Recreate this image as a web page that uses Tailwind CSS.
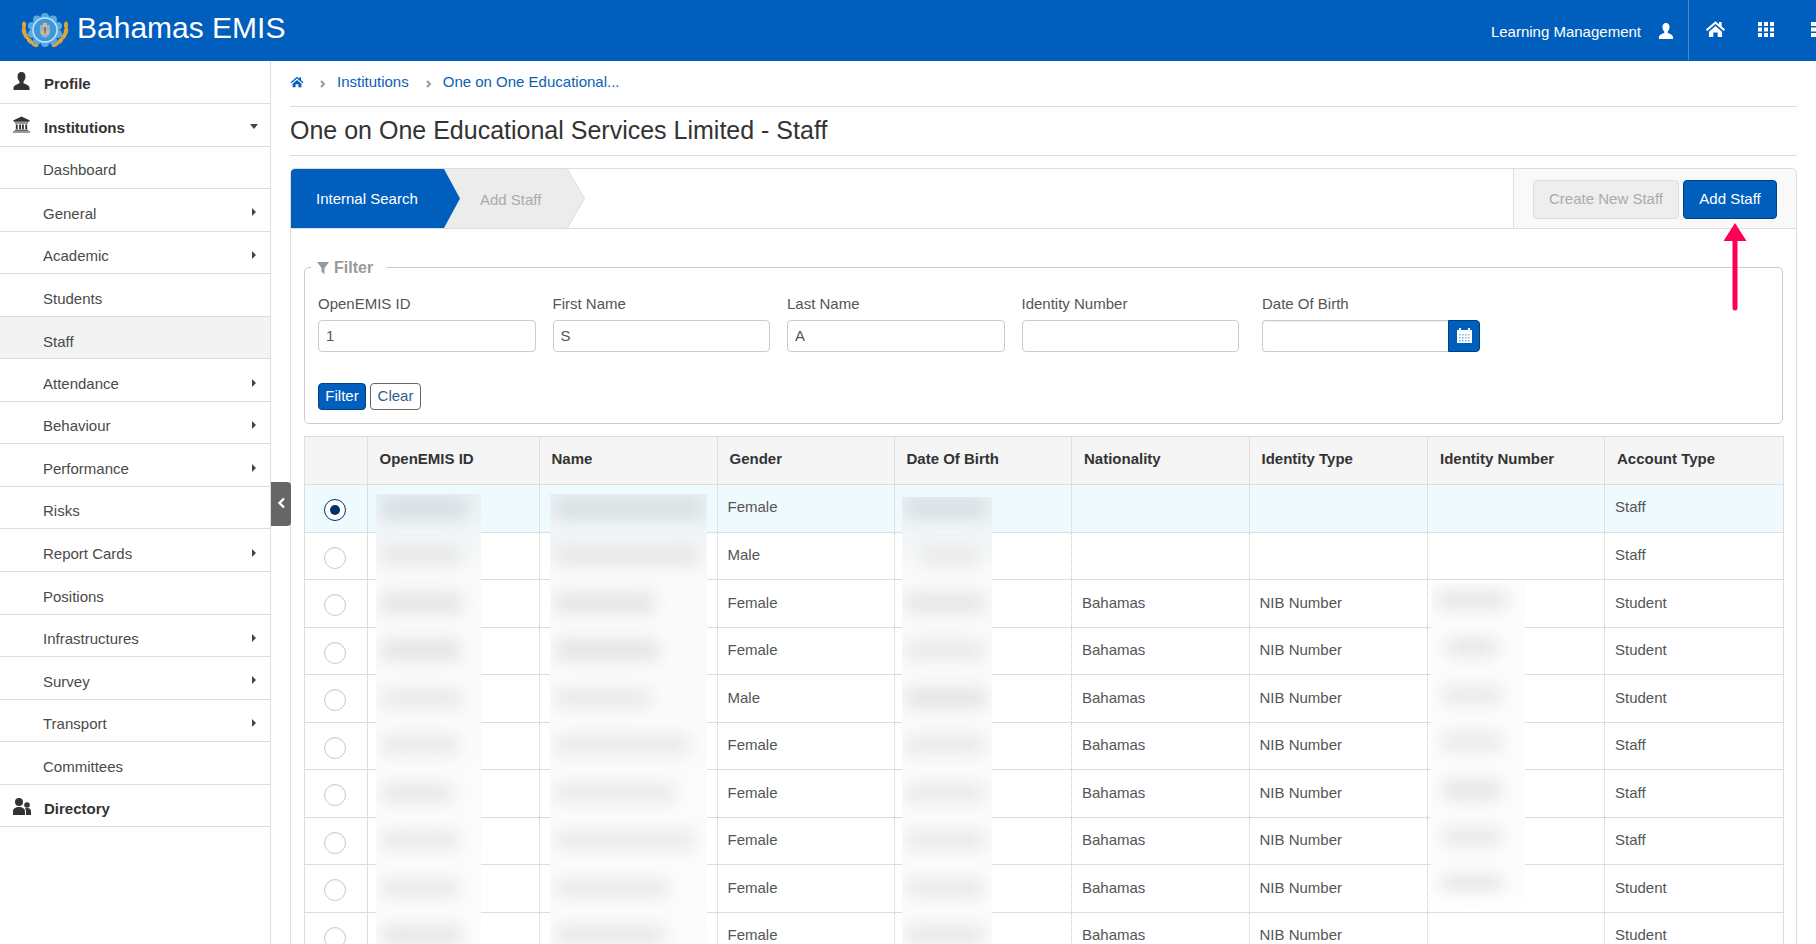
<!DOCTYPE html>
<html lang="en">
<head>
<meta charset="utf-8">
<title>Bahamas EMIS</title>
<script src="https://cdn.jsdelivr.net/npm/@tailwindcss/browser@4"></script>
</head>
<body class="font-['Liberation_Sans',Arial,sans-serif] text-[15px] text-[#555] bg-white">
<div class="relative w-[1816px] h-[944px] overflow-hidden">
  <header class="h-[61px] bg-[#005ebd] flex items-center text-white">
    <svg class="ml-[20px] shrink-0" width="50" height="40" viewBox="0 0 50 40">
      <g fill="#dba63c">
        <ellipse cx="4" cy="14" rx="2" ry="3.6"/><ellipse cx="4" cy="20" rx="2.2" ry="3.6" transform="rotate(-10 4 20)"/><ellipse cx="6" cy="25" rx="2.2" ry="3.6" transform="rotate(-30 6 25)"/><ellipse cx="10" cy="30" rx="2.2" ry="3.6" transform="rotate(-45 10 30)"/><ellipse cx="15" cy="33.500" rx="2.2" ry="3.6" transform="rotate(-65 15 33.500)"/>
        <ellipse cx="46" cy="14" rx="2" ry="3.6"/><ellipse cx="46" cy="20" rx="2.2" ry="3.6" transform="rotate(10 46 20)"/><ellipse cx="44" cy="25" rx="2.2" ry="3.6" transform="rotate(30 44 25)"/><ellipse cx="40" cy="30" rx="2.2" ry="3.6" transform="rotate(45 40 30)"/><ellipse cx="35" cy="33.500" rx="2.2" ry="3.6" transform="rotate(65 35 33.500)"/>
      </g>
      <g fill="#5aa9e2">
        <circle cx="25" cy="6" r="4"/><circle cx="33" cy="8.500" r="4"/><circle cx="38" cy="15" r="4"/><circle cx="38" cy="23" r="4"/><circle cx="33" cy="29.500" r="4"/><circle cx="25" cy="32" r="4"/><circle cx="17" cy="29.500" r="4"/><circle cx="12" cy="23" r="4"/><circle cx="12" cy="15" r="4"/><circle cx="17" cy="8.500" r="4"/>
        <circle cx="25" cy="19" r="14"/>
      </g>
      <circle cx="25" cy="19" r="12" fill="#3f96d8" stroke="#c4e6f6" stroke-width="1.500"/>
      <path d="M20 14h10v7c0 3-3 5-5 6-2-1-5-3-5-6z" fill="#8fb8c4"/>
      <path d="M23 12h4v4h-4z M21 20h8v3h-8z" fill="#d9b98a"/>
      <path d="M24 16h2v6h-2z" fill="#b85f5f"/>
    </svg>
    <span class="ml-[7px] text-[30px] leading-none -mt-[5px]">Bahamas EMIS</span>
    <span class="ml-auto mt-[3px]">Learning Management</span>
    <svg class="ml-[17px] mt-[1px]" width="16" height="16" viewBox="0 0 16 18" fill="#fff"><path d="M8 0c2.600 0 4 2 4 4.600 0 2-.8 3.800-2 5v1.600c2 .8 6 2 6 4.800v2H0v-2c0-2.800 4-4 6-4.800V9.600C4.800 8.400 4 6.600 4 4.600 4 2 5.400 0 8 0z"/></svg>
    <span class="ml-[14px] w-px h-[60px] bg-[#4a8acb] -mt-px"></span>
    <svg class="ml-[16px] -mt-[3px]" width="21" height="18" viewBox="0 0 24 20" fill="#fff"><path d="M12 1 1 10.500l1.500 1.800L12 4.200l9.500 8.100 1.500-1.800-4-3.400V2h-3v2.700z"/><path d="M4.500 13 12 6.500l7.500 6.500v6h-5v-5h-5v5h-5z"/></svg>
    <svg class="ml-[32px] -mt-[3px]" width="16" height="15" viewBox="0 0 16 15" fill="#fff"><path d="M0 0h4v4H0zM6 0h4v4H6zM12 0h4v4h-4zM0 5.500h4v4H0zM6 5.500h4v4H6zM12 5.500h4v4h-4zM0 11h4v4H0zM6 11h4v4H6zM12 11h4v4h-4z"/></svg>
    <svg class="ml-[37px] -mt-[3px]" width="5" height="15" viewBox="0 0 5 15" fill="#fff"><path d="M0 0h5v4H0zM0 5.500h5v4H0zM0 11h5v4H0z"/></svg>
  </header>

  <div class="flex h-[883px]">
    <aside class="w-[271px] shrink-0 border-r border-[#ddd] text-[#4a4a4a]">
      <div class="h-[43px] border-b border-[#ddd] flex items-center pl-[13px] pt-[5px] font-bold text-[#333]">
        <svg class="-mt-[7px]" width="17" height="18" viewBox="0 0 16 18" fill="#333"><path d="M8 0c2.600 0 4 2 4 4.600 0 2-.8 3.800-2 5v1.600c2 .8 6 2 6 4.800v2H0v-2c0-2.800 4-4 6-4.800V9.600C4.800 8.400 4 6.600 4 4.600 4 2 5.400 0 8 0z"/></svg>
        <span class="ml-[14px]">Profile</span>
      </div>
      <div class="h-[42.55px] border-b border-[#ddd] flex items-center pl-[13px] pr-[12px] pt-[7px] font-bold text-[#333]">
        <svg class="-mt-[7px]" width="17" height="17" viewBox="0 0 18 17" fill="#333"><path d="M9 0 .5 4v1.500h17V4zM2 6.500h14v1H2zM3 8.500h2v5H3zM6.500 8.500h2v5h-2zM9.500 8.500h2v5h-2zM13 8.500h2v5h-2zM2 14h14v1H2zM0 16h18v1H0z"/></svg>
        <span class="ml-[14px]">Institutions</span>
        <span class="ml-auto w-0 h-0 border-x-[4.500px] border-x-transparent border-t-[5px] border-t-[#444] -mt-[3px]"></span>
      </div>
      <div class="h-[42.55px] border-b border-[#ddd] flex items-center pl-[43px] pt-[6px]">Dashboard</div>
      <div class="h-[42.55px] border-b border-[#ddd] flex items-center pl-[43px] pr-[14px] pt-[8px]">General<span class="ml-auto w-0 h-0 border-y-[4.500px] border-y-transparent border-l-[4.500px] border-l-[#444] -mt-[3px]"></span></div>
      <div class="h-[42.55px] border-b border-[#ddd] flex items-center pl-[43px] pr-[14px] pt-[8px]">Academic<span class="ml-auto w-0 h-0 border-y-[4.500px] border-y-transparent border-l-[4.500px] border-l-[#444] -mt-[3px]"></span></div>
      <div class="h-[42.55px] border-b border-[#ddd] flex items-center pl-[43px] pt-[8px]">Students</div>
      <div class="h-[42.55px] border-b border-[#ddd] flex items-center pl-[43px] pt-[9px] bg-[#f3f3f3]">Staff</div>
      <div class="h-[42.55px] border-b border-[#ddd] flex items-center pl-[43px] pr-[14px] pt-[8px]">Attendance<span class="ml-auto w-0 h-0 border-y-[4.500px] border-y-transparent border-l-[4.500px] border-l-[#444] -mt-[3px]"></span></div>
      <div class="h-[42.55px] border-b border-[#ddd] flex items-center pl-[43px] pr-[14px] pt-[8px]">Behaviour<span class="ml-auto w-0 h-0 border-y-[4.500px] border-y-transparent border-l-[4.500px] border-l-[#444] -mt-[3px]"></span></div>
      <div class="h-[42.55px] border-b border-[#ddd] flex items-center pl-[43px] pr-[14px] pt-[8px]">Performance<span class="ml-auto w-0 h-0 border-y-[4.500px] border-y-transparent border-l-[4.500px] border-l-[#444] -mt-[3px]"></span></div>
      <div class="h-[42.55px] border-b border-[#ddd] flex items-center pl-[43px] pt-[8px]">Risks</div>
      <div class="h-[42.55px] border-b border-[#ddd] flex items-center pl-[43px] pr-[14px] pt-[8px]">Report Cards<span class="ml-auto w-0 h-0 border-y-[4.500px] border-y-transparent border-l-[4.500px] border-l-[#444] -mt-[3px]"></span></div>
      <div class="h-[42.55px] border-b border-[#ddd] flex items-center pl-[43px] pt-[8px]">Positions</div>
      <div class="h-[42.55px] border-b border-[#ddd] flex items-center pl-[43px] pr-[14px] pt-[8px]">Infrastructures<span class="ml-auto w-0 h-0 border-y-[4.500px] border-y-transparent border-l-[4.500px] border-l-[#444] -mt-[3px]"></span></div>
      <div class="h-[42.55px] border-b border-[#ddd] flex items-center pl-[43px] pr-[14px] pt-[8px]">Survey<span class="ml-auto w-0 h-0 border-y-[4.500px] border-y-transparent border-l-[4.500px] border-l-[#444] -mt-[3px]"></span></div>
      <div class="h-[42.55px] border-b border-[#ddd] flex items-center pl-[43px] pr-[14px] pt-[8px]">Transport<span class="ml-auto w-0 h-0 border-y-[4.500px] border-y-transparent border-l-[4.500px] border-l-[#444] -mt-[3px]"></span></div>
      <div class="h-[42.55px] border-b border-[#ddd] flex items-center pl-[43px] pt-[8px]">Committees</div>
      <div class="h-[42.55px] border-b border-[#ddd] flex items-center pl-[13px] pt-[8px] font-bold text-[#333]">
        <svg class="-mt-[7px]" width="18" height="17" viewBox="0 0 18 17" fill="#333"><circle cx="6" cy="4" r="4"/><path d="M0 17v-3.500C0 10.500 2.500 9 6 9s6 1.500 6 4.500V17z"/><circle cx="14" cy="7" r="2.800"/><path d="M13 17v-4c0-1-.3-1.800-1-2.600.6-.3 1.300-.4 2-.4 2.500 0 4 1.200 4 3.300V17z"/></svg>
        <span class="ml-[13px]">Directory</span>
      </div>
    </aside>

    <main class="flex-1 min-w-0 px-[19px]">
      <nav class="h-[46px] border-b border-[#ddd] flex items-center pb-[3px] text-[#0b5fb5]">
        <svg width="14" height="12" viewBox="0 0 24 20" fill="#005ebd"><path d="M12 1 1 10.500l1.500 1.800L12 4.200l9.500 8.100 1.500-1.800-4-3.400V2h-3v2.700z"/><path d="M4.500 13 12 6.500l7.500 6.500v6h-5v-5h-5v5h-5z"/></svg>
        <svg class="ml-[16px] mt-[3px]" width="6" height="8" viewBox="0 0 6 8" fill="none" stroke="#999" stroke-width="2"><path d="m1 1 3 3-3 3"/></svg>
        <span class="ml-[11px]">Institutions</span>
        <svg class="ml-[17px] mt-[3px]" width="6" height="8" viewBox="0 0 6 8" fill="none" stroke="#999" stroke-width="2"><path d="m1 1 3 3-3 3"/></svg>
        <span class="ml-[11px]">One on One Educational...</span>
      </nav>
      <h1 class="h-[49px] border-b border-[#ddd] flex items-center text-[25px] font-normal text-[#333]">One on One Educational Services Limited - Staff</h1>

      <section class="mt-[12px] border border-[#ddd] rounded-t-[5px] h-[900px]">
        <div class="h-[60px] border-b border-[#ddd] flex">
          <div class="relative w-[295px] h-[59px] shrink-0">
            <div class="absolute inset-0 bg-[#dedede] [clip-path:polygon(0_0,277px_0,294px_50%,277px_100%,0_100%)]"></div>
            <div class="absolute inset-0 bg-[#ececec] [clip-path:polygon(0_0,276px_0,293px_50%,276px_100%,0_100%)]"></div>
            <div class="absolute inset-0 bg-[#005ebd] rounded-tl-[4px] [clip-path:polygon(0_0,153px_0,169px_50%,153px_100%,0_100%)]"></div>
            <span class="absolute left-[25px] top-[19px] text-white">Internal Search</span>
            <span class="absolute left-[189px] top-[20px] text-[#aaa]">Add Staff</span>
          </div>
          <div class="ml-auto w-[283px] border-l border-[#ddd] bg-[#f9f9f9] rounded-tr-[5px] flex gap-[4px] pl-[19px] pt-[11px]">
            <button class="w-[146px] h-[39px] rounded-[4px] border border-[#ddd] bg-[#eee] text-[#aaa]">Create New Staff</button>
            <button class="w-[94px] h-[39px] rounded-[4px] border border-[#003f80] bg-[#005ebd] text-white">Add Staff</button>
          </div>
        </div>

        <div class="px-[13px] pt-[26px]">
          <fieldset class="border border-[#ccc] rounded-[5px] pl-[13px] pr-[13px] pb-[13px] h-[169px]">
            <legend class="ml-[-7px] w-[75px] h-[24px] pl-[6px] pt-[2px] flex items-center font-bold text-[16px] text-[#999]">
              <svg width="12" height="12" viewBox="0 0 12 12" fill="#999"><path d="M0 0h12L7.500 6v6l-3-2V6z"/></svg>
              <span class="ml-[5px]">Filter</span>
            </legend>
            <div class="flex gap-[17px] mt-[14px]">
              <label class="block w-[217.500px]">OpenEMIS ID<input class="mt-[4px] block w-full h-[32px] border border-[#ccc] rounded-[4px] px-[7px] text-[#555]" value="1"></label>
              <label class="block w-[217.500px]">First Name<input class="mt-[4px] block w-full h-[32px] border border-[#ccc] rounded-[4px] px-[7px] text-[#555]" value="S"></label>
              <label class="block w-[217.500px]">Last Name<input class="mt-[4px] block w-full h-[32px] border border-[#ccc] rounded-[4px] px-[7px] text-[#555]" value="A"></label>
              <label class="block w-[217.500px]">Identity Number<input class="mt-[4px] block w-full h-[32px] border border-[#ccc] rounded-[4px] px-[7px] text-[#555]" value=""></label>
              <label class="block w-[218px] ml-[6px]">Date Of Birth
                <span class="mt-[4px] flex h-[32px]">
                  <input class="flex-1 min-w-0 border border-[#ccc] border-r-0 rounded-l-[4px] px-[7px] shadow-[inset_0_1px_1px_rgba(0,0,0,0.08)]" value="">
                  <span class="w-[32px] bg-[#005ebd] border border-[#003f80] rounded-r-[4px] flex items-center justify-center">
                    <svg width="15" height="15" viewBox="0 0 15 15"><path d="M0 2h15v13H0z" fill="#fff"/><path d="M2 0h2v3H2zM11 0h2v3h-2z" fill="#fff"/><path d="M2 6h1.500v1.500H2zM5 6h1.500v1.500H5zM8 6h1.500v1.500H8zM11 6h1.500v1.500H11zM2 9h1.500v1.500H2zM5 9h1.500v1.500H5zM8 9h1.500v1.500H8zM11 9h1.500v1.500H11zM2 12h1.500v1.500H2zM5 12h1.500v1.500H5zM8 12h1.500v1.500H8zM11 12h1.500v1.500H11z" fill="#7fb0e0"/></svg>
                  </span>
                </span>
              </label>
            </div>
            <div class="flex gap-[4px] mt-[31px]">
              <button class="w-[48px] h-[27px] rounded-[4px] border border-[#003f80] bg-[#005ebd] text-white">Filter</button>
              <button class="w-[51px] h-[27px] rounded-[4px] border border-[#666] bg-white text-[#2f5f8f]">Clear</button>
            </div>
          </fieldset>

          <div class="relative mt-[12px]">
            <table class="w-[1479px] table-fixed border-collapse">
              <colgroup>
                <col class="w-[62.500px]"><col class="w-[172px]"><col class="w-[178px]"><col class="w-[177px]"><col class="w-[177.500px]"><col class="w-[177.500px]"><col class="w-[178.500px]"><col class="w-[177px]"><col class="w-[179px]">
              </colgroup>
              <thead>
                <tr class="h-[48px] bg-[#f5f5f5] text-left font-bold text-[#333]">
                  <th class="border border-[#ddd]"></th>
                  <th class="border border-[#ddd] pl-[12px] pb-[2px]">OpenEMIS ID</th>
                  <th class="border border-[#ddd] pl-[12px] pb-[2px]">Name</th>
                  <th class="border border-[#ddd] pl-[12px] pb-[2px]">Gender</th>
                  <th class="border border-[#ddd] pl-[12px] pb-[2px]">Date Of Birth</th>
                  <th class="border border-[#ddd] pl-[12px] pb-[2px]">Nationality</th>
                  <th class="border border-[#ddd] pl-[12px] pb-[2px]">Identity Type</th>
                  <th class="border border-[#ddd] pl-[12px] pb-[2px]">Identity Number</th>
                  <th class="border border-[#ddd] pl-[12px] pb-[2px]">Account Type</th>
                </tr>
              </thead>
              <tbody>
                <tr class="h-[47.500px] bg-[#eefafe] border-b border-[#ddd]">
                  <td class="border-x border-[#ddd] pt-[1px] pr-[2px]"><span class="mx-auto block w-[22px] h-[22px] rounded-full border border-[#003366] bg-white p-[5px] mt-[3px]"><span class="block w-[10px] h-[10px] rounded-full bg-[#003366]"></span></span></td>
                  <td class="border-r border-dotted border-[#ccc]"></td><td class="border-r border-dotted border-[#ccc]"></td>
                  <td class="border-r border-dotted border-[#ccc] pl-[10px] pb-[3px]">Female</td><td class="border-r border-dotted border-[#ccc]"></td><td class="border-r border-dotted border-[#ccc]"></td><td class="border-r border-dotted border-[#ccc]"></td><td class="border-r border-dotted border-[#ccc]"></td>
                  <td class="border-r border-[#ddd] pl-[10px] pb-[3px]">Staff</td>
                </tr>
                <tr class="h-[47.500px] border-b border-[#ddd]">
                  <td class="border-x border-[#ddd] pt-[1px] pr-[2px]"><span class="mx-auto block w-[22px] h-[22px] rounded-full border border-[#ccc] mt-[3px] shadow-[inset_0_1px_1px_rgba(0,0,0,0.06)]"></span></td>
                  <td class="border-r border-dotted border-[#ccc]"></td><td class="border-r border-dotted border-[#ccc]"></td>
                  <td class="border-r border-dotted border-[#ccc] pl-[10px] pb-[1px]">Male</td><td class="border-r border-dotted border-[#ccc]"></td><td class="border-r border-dotted border-[#ccc]"></td><td class="border-r border-dotted border-[#ccc]"></td><td class="border-r border-dotted border-[#ccc]"></td>
                  <td class="border-r border-[#ddd] pl-[10px] pb-[1px]">Staff</td>
                </tr>
                <tr class="h-[47.500px] border-b border-[#ddd]">
                  <td class="border-x border-[#ddd] pt-[1px] pr-[2px]"><span class="mx-auto block w-[22px] h-[22px] rounded-full border border-[#ccc] mt-[3px] shadow-[inset_0_1px_1px_rgba(0,0,0,0.06)]"></span></td>
                  <td class="border-r border-dotted border-[#ccc]"></td><td class="border-r border-dotted border-[#ccc]"></td>
                  <td class="border-r border-dotted border-[#ccc] pl-[10px] pb-[1px]">Female</td><td class="border-r border-dotted border-[#ccc]"></td><td class="border-r border-dotted border-[#ccc] pl-[10px] pb-[1px]">Bahamas</td><td class="border-r border-dotted border-[#ccc] pl-[10px] pb-[1px]">NIB Number</td><td class="border-r border-dotted border-[#ccc]"></td>
                  <td class="border-r border-[#ddd] pl-[10px] pb-[1px]">Student</td>
                </tr>
                <tr class="h-[47.500px] border-b border-[#ddd]">
                  <td class="border-x border-[#ddd] pt-[1px] pr-[2px]"><span class="mx-auto block w-[22px] h-[22px] rounded-full border border-[#ccc] mt-[3px] shadow-[inset_0_1px_1px_rgba(0,0,0,0.06)]"></span></td>
                  <td class="border-r border-dotted border-[#ccc]"></td><td class="border-r border-dotted border-[#ccc]"></td>
                  <td class="border-r border-dotted border-[#ccc] pl-[10px] pb-[1px]">Female</td><td class="border-r border-dotted border-[#ccc]"></td><td class="border-r border-dotted border-[#ccc] pl-[10px] pb-[1px]">Bahamas</td><td class="border-r border-dotted border-[#ccc] pl-[10px] pb-[1px]">NIB Number</td><td class="border-r border-dotted border-[#ccc]"></td>
                  <td class="border-r border-[#ddd] pl-[10px] pb-[1px]">Student</td>
                </tr>
                <tr class="h-[47.500px] border-b border-[#ddd]">
                  <td class="border-x border-[#ddd] pt-[1px] pr-[2px]"><span class="mx-auto block w-[22px] h-[22px] rounded-full border border-[#ccc] mt-[3px] shadow-[inset_0_1px_1px_rgba(0,0,0,0.06)]"></span></td>
                  <td class="border-r border-dotted border-[#ccc]"></td><td class="border-r border-dotted border-[#ccc]"></td>
                  <td class="border-r border-dotted border-[#ccc] pl-[10px] pb-[1px]">Male</td><td class="border-r border-dotted border-[#ccc]"></td><td class="border-r border-dotted border-[#ccc] pl-[10px] pb-[1px]">Bahamas</td><td class="border-r border-dotted border-[#ccc] pl-[10px] pb-[1px]">NIB Number</td><td class="border-r border-dotted border-[#ccc]"></td>
                  <td class="border-r border-[#ddd] pl-[10px] pb-[1px]">Student</td>
                </tr>
                <tr class="h-[47.500px] border-b border-[#ddd]">
                  <td class="border-x border-[#ddd] pt-[1px] pr-[2px]"><span class="mx-auto block w-[22px] h-[22px] rounded-full border border-[#ccc] mt-[3px] shadow-[inset_0_1px_1px_rgba(0,0,0,0.06)]"></span></td>
                  <td class="border-r border-dotted border-[#ccc]"></td><td class="border-r border-dotted border-[#ccc]"></td>
                  <td class="border-r border-dotted border-[#ccc] pl-[10px] pb-[1px]">Female</td><td class="border-r border-dotted border-[#ccc]"></td><td class="border-r border-dotted border-[#ccc] pl-[10px] pb-[1px]">Bahamas</td><td class="border-r border-dotted border-[#ccc] pl-[10px] pb-[1px]">NIB Number</td><td class="border-r border-dotted border-[#ccc]"></td>
                  <td class="border-r border-[#ddd] pl-[10px] pb-[1px]">Staff</td>
                </tr>
                <tr class="h-[47.500px] border-b border-[#ddd]">
                  <td class="border-x border-[#ddd] pt-[1px] pr-[2px]"><span class="mx-auto block w-[22px] h-[22px] rounded-full border border-[#ccc] mt-[3px] shadow-[inset_0_1px_1px_rgba(0,0,0,0.06)]"></span></td>
                  <td class="border-r border-dotted border-[#ccc]"></td><td class="border-r border-dotted border-[#ccc]"></td>
                  <td class="border-r border-dotted border-[#ccc] pl-[10px] pb-[1px]">Female</td><td class="border-r border-dotted border-[#ccc]"></td><td class="border-r border-dotted border-[#ccc] pl-[10px] pb-[1px]">Bahamas</td><td class="border-r border-dotted border-[#ccc] pl-[10px] pb-[1px]">NIB Number</td><td class="border-r border-dotted border-[#ccc]"></td>
                  <td class="border-r border-[#ddd] pl-[10px] pb-[1px]">Staff</td>
                </tr>
                <tr class="h-[47.500px] border-b border-[#ddd]">
                  <td class="border-x border-[#ddd] pt-[1px] pr-[2px]"><span class="mx-auto block w-[22px] h-[22px] rounded-full border border-[#ccc] mt-[3px] shadow-[inset_0_1px_1px_rgba(0,0,0,0.06)]"></span></td>
                  <td class="border-r border-dotted border-[#ccc]"></td><td class="border-r border-dotted border-[#ccc]"></td>
                  <td class="border-r border-dotted border-[#ccc] pl-[10px] pb-[1px]">Female</td><td class="border-r border-dotted border-[#ccc]"></td><td class="border-r border-dotted border-[#ccc] pl-[10px] pb-[1px]">Bahamas</td><td class="border-r border-dotted border-[#ccc] pl-[10px] pb-[1px]">NIB Number</td><td class="border-r border-dotted border-[#ccc]"></td>
                  <td class="border-r border-[#ddd] pl-[10px] pb-[1px]">Staff</td>
                </tr>
                <tr class="h-[47.500px] border-b border-[#ddd]">
                  <td class="border-x border-[#ddd] pt-[1px] pr-[2px]"><span class="mx-auto block w-[22px] h-[22px] rounded-full border border-[#ccc] mt-[3px] shadow-[inset_0_1px_1px_rgba(0,0,0,0.06)]"></span></td>
                  <td class="border-r border-dotted border-[#ccc]"></td><td class="border-r border-dotted border-[#ccc]"></td>
                  <td class="border-r border-dotted border-[#ccc] pl-[10px] pb-[1px]">Female</td><td class="border-r border-dotted border-[#ccc]"></td><td class="border-r border-dotted border-[#ccc] pl-[10px] pb-[1px]">Bahamas</td><td class="border-r border-dotted border-[#ccc] pl-[10px] pb-[1px]">NIB Number</td><td class="border-r border-dotted border-[#ccc]"></td>
                  <td class="border-r border-[#ddd] pl-[10px] pb-[1px]">Student</td>
                </tr>
                <tr class="h-[47.500px] border-b border-[#ddd]">
                  <td class="border-x border-[#ddd] pt-[1px] pr-[2px]"><span class="mx-auto block w-[22px] h-[22px] rounded-full border border-[#ccc] mt-[3px] shadow-[inset_0_1px_1px_rgba(0,0,0,0.06)]"></span></td>
                  <td class="border-r border-dotted border-[#ccc]"></td><td class="border-r border-dotted border-[#ccc]"></td>
                  <td class="border-r border-dotted border-[#ccc] pl-[10px] pb-[1px]">Female</td><td class="border-r border-dotted border-[#ccc]"></td><td class="border-r border-dotted border-[#ccc] pl-[10px] pb-[1px]">Bahamas</td><td class="border-r border-dotted border-[#ccc] pl-[10px] pb-[1px]">NIB Number</td><td class="border-r border-dotted border-[#ccc]"></td>
                  <td class="border-r border-[#ddd] pl-[10px] pb-[1px]">Student</td>
                </tr>
              </tbody>
            </table>

            <!-- blurred patches over the private columns -->
            <div class="absolute left-[72px] top-[58px] w-[105px] h-[470px] overflow-hidden bg-[linear-gradient(180deg,#eaf2f5_0,#f2f6f7_40px,#fafafa_80px,#fcfcfc_100%)]">
              <div class="-mt-[10px]">
                <div class="h-[47.500px] flex items-center pl-[6px]"><div class="w-[85px] h-[22px] bg-[#d6dfe2] blur-[8px]"></div></div>
                <div class="h-[47.500px] flex items-center pl-[6px]"><div class="w-[78px] h-[18px] bg-[#e6e6e6] blur-[8px]"></div></div>
                <div class="h-[47.500px] flex items-center pl-[6px]"><div class="w-[80px] h-[20px] bg-[#e4e4e4] blur-[8px]"></div></div>
                <div class="h-[47.500px] flex items-center pl-[6px]"><div class="w-[78px] h-[20px] bg-[#e4e4e4] blur-[8px]"></div></div>
                <div class="h-[47.500px] flex items-center pl-[6px]"><div class="w-[80px] h-[18px] bg-[#e8e8e8] blur-[8px]"></div></div>
                <div class="h-[47.500px] flex items-center pl-[6px]"><div class="w-[76px] h-[18px] bg-[#e8e8e8] blur-[8px]"></div></div>
                <div class="h-[47.500px] flex items-center pl-[6px]"><div class="w-[70px] h-[18px] bg-[#e6e6e6] blur-[8px]"></div></div>
                <div class="h-[47.500px] flex items-center pl-[6px]"><div class="w-[76px] h-[18px] bg-[#e8e8e8] blur-[8px]"></div></div>
                <div class="h-[47.500px] flex items-center pl-[6px]"><div class="w-[76px] h-[18px] bg-[#e8e8e8] blur-[8px]"></div></div>
                <div class="h-[47.500px] flex items-center pl-[6px]"><div class="w-[80px] h-[20px] bg-[#e6e6e6] blur-[8px]"></div></div>
              </div>
            </div>
            <div class="absolute left-[246px] top-[58px] w-[157px] h-[470px] overflow-hidden bg-[linear-gradient(180deg,#eaf2f5_0,#f2f6f7_40px,#fafafa_80px,#fcfcfc_100%)]">
              <div class="-mt-[10px]">
                <div class="h-[47.500px] flex items-center pl-[6px]"><div class="w-[148px] h-[22px] bg-[#d8e0e3] blur-[8px]"></div></div>
                <div class="h-[47.500px] flex items-center pl-[6px]"><div class="w-[142px] h-[20px] bg-[#e6e6e6] blur-[8px]"></div></div>
                <div class="h-[47.500px] flex items-center pl-[6px]"><div class="w-[98px] h-[20px] bg-[#e4e4e4] blur-[8px]"></div></div>
                <div class="h-[47.500px] flex items-center pl-[6px]"><div class="w-[102px] h-[20px] bg-[#e4e4e4] blur-[8px]"></div></div>
                <div class="h-[47.500px] flex items-center pl-[6px]"><div class="w-[94px] h-[18px] bg-[#e8e8e8] blur-[8px]"></div></div>
                <div class="h-[47.500px] flex items-center pl-[6px]"><div class="w-[132px] h-[18px] bg-[#e8e8e8] blur-[8px]"></div></div>
                <div class="h-[47.500px] flex items-center pl-[6px]"><div class="w-[118px] h-[18px] bg-[#e8e8e8] blur-[8px]"></div></div>
                <div class="h-[47.500px] flex items-center pl-[6px]"><div class="w-[138px] h-[18px] bg-[#e8e8e8] blur-[8px]"></div></div>
                <div class="h-[47.500px] flex items-center pl-[6px]"><div class="w-[112px] h-[18px] bg-[#e8e8e8] blur-[8px]"></div></div>
                <div class="h-[47.500px] flex items-center pl-[6px]"><div class="w-[108px] h-[20px] bg-[#e8e8e8] blur-[8px]"></div></div>
              </div>
            </div>
            <div class="absolute left-[598px] top-[61px] w-[90px] h-[470px] overflow-hidden bg-[linear-gradient(180deg,#eaf2f5_0,#f2f6f7_40px,#fafafa_80px,#fcfcfc_100%)]">
              <div class="-mt-[13px]">
                <div class="h-[47.500px] flex items-center pl-[4px]"><div class="w-[80px] h-[20px] bg-[#d6dfe2] blur-[8px]"></div></div>
                <div class="h-[47.500px] flex items-center pl-[20px]"><div class="w-[56px] h-[18px] bg-[#e8e8e8] blur-[8px]"></div></div>
                <div class="h-[47.500px] flex items-center pl-[4px]"><div class="w-[78px] h-[18px] bg-[#e4e4e4] blur-[8px]"></div></div>
                <div class="h-[47.500px] flex items-center pl-[4px]"><div class="w-[78px] h-[18px] bg-[#e8e8e8] blur-[8px]"></div></div>
                <div class="h-[47.500px] flex items-center pl-[4px]"><div class="w-[80px] h-[20px] bg-[#e4e4e4] blur-[8px]"></div></div>
                <div class="h-[47.500px] flex items-center pl-[4px]"><div class="w-[78px] h-[18px] bg-[#e8e8e8] blur-[8px]"></div></div>
                <div class="h-[47.500px] flex items-center pl-[4px]"><div class="w-[78px] h-[18px] bg-[#e8e8e8] blur-[8px]"></div></div>
                <div class="h-[47.500px] flex items-center pl-[4px]"><div class="w-[78px] h-[18px] bg-[#e8e8e8] blur-[8px]"></div></div>
                <div class="h-[47.500px] flex items-center pl-[4px]"><div class="w-[78px] h-[18px] bg-[#e8e8e8] blur-[8px]"></div></div>
                <div class="h-[47.500px] flex items-center pl-[4px]"><div class="w-[78px] h-[20px] bg-[#e8e8e8] blur-[8px]"></div></div>
              </div>
            </div>
            <div class="absolute left-[1127px] top-[147px] w-[94px] h-[330px] overflow-hidden bg-[#fcfcfc] [mask-image:linear-gradient(180deg,#000_0,#000_300px,transparent_100%)]">
              <div class="-mt-[7px]">
                <div class="h-[47.500px] flex items-center pl-[6px]"><div class="w-[70px] h-[18px] bg-[#e6e6e6] blur-[8px]"></div></div>
                <div class="h-[47.500px] flex items-center pl-[16px]"><div class="w-[50px] h-[18px] bg-[#e6e6e6] blur-[8px]"></div></div>
                <div class="h-[47.500px] flex items-center pl-[12px]"><div class="w-[58px] h-[18px] bg-[#e8e8e8] blur-[8px]"></div></div>
                <div class="h-[47.500px] flex items-center pl-[12px]"><div class="w-[58px] h-[18px] bg-[#e8e8e8] blur-[8px]"></div></div>
                <div class="h-[47.500px] flex items-center pl-[12px]"><div class="w-[58px] h-[20px] bg-[#e6e6e6] blur-[8px]"></div></div>
                <div class="h-[47.500px] flex items-center pl-[12px]"><div class="w-[58px] h-[18px] bg-[#e8e8e8] blur-[8px]"></div></div>
                <div class="h-[47.500px] flex items-center pl-[12px]"><div class="w-[58px] h-[20px] bg-[#e6e6e6] blur-[8px]"></div></div>
              </div>
            </div>
          </div>
        </div>
      </section>
    </main>
  </div>

  <!-- sidebar collapse handle -->
  <div class="absolute left-[271px] top-[482px] w-[20px] h-[44px] bg-[#666] rounded-r-[4px] flex items-center justify-center">
    <svg class="-mt-[2px]" width="9" height="12" viewBox="0 0 9 12" fill="none" stroke="#fff" stroke-width="2.400"><path d="M7 1.500 2.500 6 7 10.500"/></svg>
  </div>
  <!-- red annotation arrow -->
  <svg class="absolute left-[1720px] top-[220px]" width="30" height="95" viewBox="0 0 30 95"><path d="M15 3 26.500 21h-9v67a2.500 2.500 0 0 1-5 0V21h-9z" fill="#ff0055"/></svg>
</div>
</body>
</html>
